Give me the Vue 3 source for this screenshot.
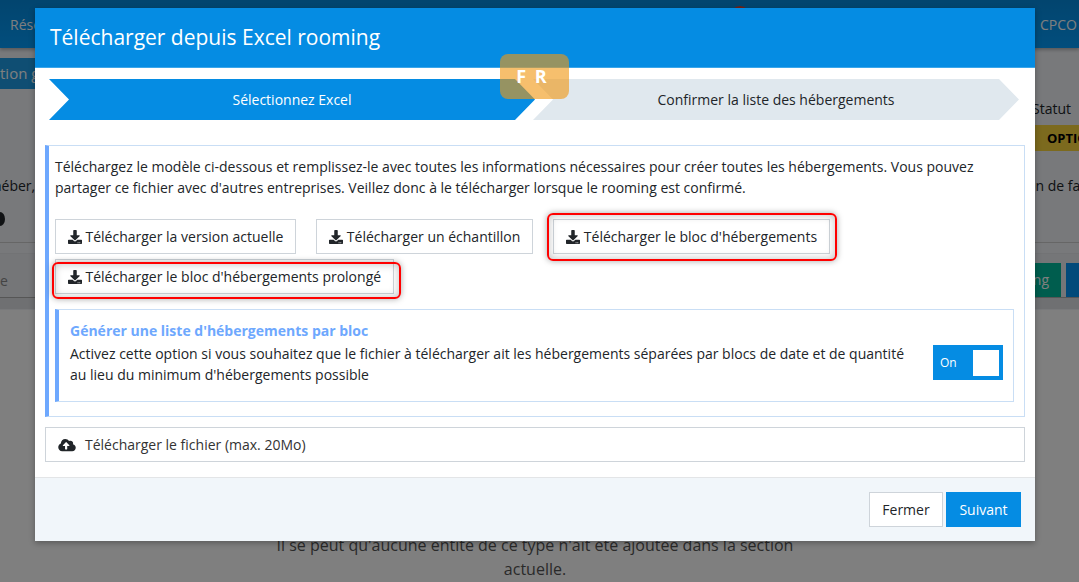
<script setup>
const steps = [
  { label: 'Sélectionnez Excel', active: true },
  { label: 'Confirmer la liste des hébergements', active: false }
]
const downloads = [
  { label: 'Télécharger la version actuelle', mark: '' },
  { label: 'Télécharger un échantillon', mark: '' },
  { label: "Télécharger le bloc d'hébergements", mark: 'mark-a' },
  { label: "Télécharger le bloc d'hébergements prolongé", mark: 'mark-b' }
]
</script>

<template>
  <div class="page">
    <header class="nav">
      <span>Réservations</span>
      <i class="nav-dot"></i>
      <span class="nav-right">CPCO</span>
    </header>
    <div class="upper">
      <div class="tab">tion générale</div>
      <div class="status-row"><span class="status-label">Statut</span></div>
      <div class="status-row"><span class="status-value">OPTIO</span></div>
      <div class="info-row"><span class="info-left">héber,</span><span class="info-right">on de fa</span></div>
      <div class="dot-row"><i class="dark-dot"></i></div>
      <div class="band"></div>
      <div class="filter-row">
        <span class="filter-text">e</span>
        <span class="btn-green">Rooming</span>
        <span class="btn-blue"></span>
      </div>
      <div class="band-low"></div>
    </div>
    <p class="empty">Il se peut qu'aucune entité de ce type n'ait été ajoutée dans la section actuelle.</p>

    <div class="overlay"></div>

    <section class="modal">
      <h1 class="modal-title">Télécharger depuis Excel rooming</h1>
      <div class="modal-body">
        <div class="stepper">
          <div v-for="s in steps" :key="s.label" class="step" :class="{ active: s.active }">{{ s.label }}</div>
        </div>
        <div class="alert">
          <p class="alert-text">Téléchargez le modèle ci-dessous et remplissez-le avec toutes les informations nécessaires pour créer toutes les hébergements. Vous pouvez partager ce fichier avec d'autres entreprises. Veillez donc à le télécharger lorsque le rooming est confirmé.</p>
          <div class="downloads">
            <button v-for="d in downloads" :key="d.label" class="dl" :class="d.mark" type="button">
              <svg class="dl-icon" viewBox="0 0 512 512" aria-hidden="true"><path d="M216 0h80c13.3 0 24 10.7 24 24v168h87.7c17.8 0 26.7 21.5 14.1 34.1L269.7 378.3c-7.5 7.5-19.8 7.5-27.3 0L90.1 226.1c-12.6-12.6-3.7-34.1 14.1-34.1H192V24c0-13.3 10.7-24 24-24zm296 376v112c0 13.3-10.7 24-24 24H24c-13.3 0-24-10.7-24-24V376c0-13.3 10.7-24 24-24h146.7l49 49c20.1 20.1 52.5 20.1 72.6 0l49-49H488c13.3 0 24 10.7 24 24zm-124 88c0-11-9-20-20-20s-20 9-20 20 9 20 20 20 20-9 20-20zm64 0c0-11-9-20-20-20s-20 9-20 20 9 20 20 20 20-9 20-20z"/></svg>
              <span>{{ d.label }}</span>
            </button>
          </div>
          <div class="option">
            <div class="option-copy">
              <h2 class="option-title">Générer une liste d'hébergements par bloc</h2>
              <p class="option-text">Activez cette option si vous souhaitez que le fichier à télécharger ait les hébergements séparées par blocs de date et de quantité au lieu du minimum d'hébergements possible</p>
            </div>
            <div class="toggle"><span>On</span><i class="knob"></i></div>
          </div>
        </div>
        <div class="upload">
          <svg class="up-icon" viewBox="0 0 640 512" aria-hidden="true"><path d="M537.6 226.6c4.1-10.7 6.4-22.4 6.4-34.6 0-53-43-96-96-96-19.7 0-38.1 6-53.3 16.2C367 64.2 315.3 32 256 32c-88.4 0-160 71.6-160 160 0 2.7.1 5.4.2 8.1C40.2 219.8 0 273.2 0 336c0 79.5 64.5 144 144 144h368c70.7 0 128-57.3 128-128 0-61.9-44-113.6-102.4-125.4zM393.4 288H328v112c0 8.8-7.2 16-16 16h-48c-8.8 0-16-7.2-16-16V288h-65.4c-14.3 0-21.4-17.2-11.3-27.3l105.4-105.4c6.2-6.2 16.4-6.2 22.6 0l105.4 105.4c10.1 10.1 3 27.3-11.3 27.3z"/></svg>
          <span>Télécharger le fichier (max. 20Mo)</span>
        </div>
      </div>
      <footer class="modal-foot">
        <button class="foot-btn" type="button">Fermer</button>
        <button class="foot-btn primary" type="button">Suivant</button>
      </footer>
    </section>

    <div class="lang-badge">F R</div>
  </div>
</template>

<style>
html, body { margin: 0; padding: 0; background: #fff; }
</style>

<style scoped>
.page {
  position: relative;
  width: 1079px;
  height: 582px;
  overflow: hidden;
  background: #fff;
  color: #212529;
  font: 14px/21px "Open Sans", "Liberation Sans", sans-serif;
}
.nav {
  position: relative;
  z-index: 1;
  height: 48px;
  background: linear-gradient(#058ade, #059cfa);
  box-shadow: 0 2px 3px rgba(0, 0, 0, .25);
  color: #fff;
  display: flex;
  justify-content: space-between;
  align-items: center;
  padding: 0 0 0 10px;
  white-space: nowrap;
}
.nav-right { width: 39px; overflow: hidden; }
.nav-dot {
  position: absolute;
  left: 730px;
  top: 6px;
  width: 20px;
  height: 20px;
  border-radius: 50%;
  background: #e5402a;
}
.upper { height: 262px; background: #f0f2f6; overflow: hidden; }
.tab {
  width: 120px;
  height: 31px;
  margin-top: 10px;
  background: #1e9ce6;
  color: #fff;
  line-height: 31px;
  font-size: 15px;
  white-space: nowrap;
  overflow: hidden;
}
.status-row { display: flex; justify-content: flex-end; }
.status-label { width: 47px; margin-top: 9px; }
.status-value {
  width: 44px;
  height: 26px;
  margin-top: 6px;
  padding-left: 12px;
  box-sizing: border-box;
  background: #f8d43c;
  color: #000;
  font-size: 13px;
  font-weight: 700;
  line-height: 26px;
  white-space: nowrap;
  overflow: hidden;
}
.info-row {
  display: flex;
  justify-content: space-between;
  margin-top: 24px;
  white-space: nowrap;
}
.info-left { margin-left: -7px; }
.info-right { width: 52px; overflow: hidden; }
.dot-row { height: 46px; padding-top: 16px; box-sizing: border-box; }
.dark-dot {
  display: block;
  width: 10px;
  height: 14px;
  margin-left: -5px;
  border-radius: 50%;
  background: #212529;
}
.band { height: 12px; border-top: 1px solid #cdcdcd; border-bottom: 1px solid #e4e6ea; box-sizing: border-box; }
.filter-row {
  display: flex;
  justify-content: flex-end;
  align-items: center;
  height: 44px;
  gap: 5px;
  padding-top: 9px;
  box-sizing: border-box;
  background: #eaecf0;
  border-bottom: 1px solid #adadad;
}
.filter-text { margin-right: auto; color: #888; }
.btn-green {
  width: 26px;
  height: 34px;
  padding-right: 12px;
  box-sizing: border-box;
  background: #00ba9c;
  color: #fff;
  line-height: 34px;
  display: flex;
  justify-content: flex-end;
  overflow: hidden;
}
.btn-blue { width: 13px; height: 34px; background: #0494f4; }
.band-low { height: 11px; background: #dfe1e5; }
.empty {
  width: 560px;
  margin: 223px 0 0 255px;
  font-size: 16px;
  line-height: 24px;
  text-align: center;
  color: #555;
}
.overlay {
  position: absolute;
  inset: 0;
  z-index: 2;
  background: rgba(0, 0, 0, .5);
}
.modal {
  position: absolute;
  z-index: 3;
  left: 35px;
  top: 8px;
  width: 1000px;
  height: 533px;
  display: flex;
  flex-direction: column;
  background: #fff;
  box-shadow: 0 2px 6px rgba(0, 0, 0, .3);
}
.modal-title {
  margin: 0;
  height: 60px;
  padding: 0 15px;
  box-sizing: border-box;
  background: #058ce3;
  border-bottom: 1px solid #3ba6ea;
  color: #fff;
  font-size: 21px;
  font-weight: 400;
  line-height: 59px;
}
.modal-body { flex: 1; padding: 11px 10px 0; }
.stepper {
  display: grid;
  grid-template-columns: 484px 486px;
  margin: 0 4px 25px;
  height: 41px;
}
.step {
  display: flex;
  align-items: center;
  justify-content: center;
  background: #e0e8ee;
  color: #212529;
  clip-path: polygon(0 0, calc(100% - 20px) 0, 100% 50%, calc(100% - 20px) 100%, 0 100%, 20px 50%);
}
.step.active { margin-right: -2px; background: #058ce3; color: #fff; }
.alert {
  box-sizing: border-box;
  height: 272px;
  padding: 10px 10px 0 6px;
  border: 1px solid #c9def5;
  border-left: 4px solid #6ea8fe;
}
.alert-text { margin: 0; }
.downloads {
  display: flex;
  flex-wrap: wrap;
  column-gap: 20px;
  row-gap: 5px;
  margin-top: 21px;
}
.dl {
  position: relative;
  display: inline-flex;
  align-items: center;
  gap: 3.5px;
  height: 35px;
  padding: 0 12px;
  background: #fff;
  border: 1px solid #ced4da;
  border-radius: 0;
  color: #212529;
  font: inherit;
}
.mark-a::after, .mark-b::after {
  content: "";
  position: absolute;
  border: 2px solid #f00;
  border-radius: 6px;
  box-shadow: 0 0 6px rgba(0, 0, 0, .35), inset 0 0 8px rgba(0, 0, 0, .25);
}
.mark-a::after { left: -7px; right: -8px; top: -7px; bottom: -8px; }
.mark-b::after { left: -4px; right: -8px; top: 2px; bottom: -6px; }
.dl-icon { width: 14px; height: 14px; fill: #212529; flex: none; }
.option {
  display: flex;
  align-items: flex-start;
  justify-content: space-between;
  box-sizing: border-box;
  height: 93px;
  margin-top: 15px;
  padding: 10px 10px 0 11px;
  border: 1px solid #c9def5;
  border-left: 4px solid #6ea8fe;
}
.option-copy { width: 845px; }
.option-title {
  margin: 0 0 2px;
  color: #6ea8fe;
  font-size: 14px;
  font-weight: 700;
  line-height: 21px;
}
.option-text { margin: 0; }
.toggle {
  display: flex;
  align-items: center;
  justify-content: space-between;
  box-sizing: border-box;
  width: 70px;
  height: 35px;
  margin-top: 25px;
  padding: 0 4px 0 7px;
  background: #058ce3;
  color: #fff;
  font-size: 12px;
}
.knob { width: 26px; height: 26px; background: #fff; }
.upload {
  display: flex;
  align-items: center;
  gap: 9px;
  box-sizing: border-box;
  height: 35px;
  margin-top: 10px;
  padding-left: 12px;
  border: 1px solid #ced4da;
  color: #333;
}
.up-icon { width: 18px; height: 14px; fill: #212529; flex: none; }
.modal-foot {
  display: flex;
  justify-content: flex-end;
  align-items: center;
  gap: 3px;
  box-sizing: border-box;
  height: 64px;
  padding: 0 14px;
  background: #f1f6fa;
  border-top: 1px solid #e3e5e7;
}
.foot-btn {
  width: 74px;
  height: 35px;
  padding: 0;
  background: #fff;
  border: 1px solid #ced4da;
  border-radius: 0;
  color: #212529;
  font: inherit;
}
.foot-btn.primary { width: 75px; background: #058ce3; border-color: #058ce3; color: #fff; }
.lang-badge {
  position: absolute;
  z-index: 4;
  left: 500px;
  top: 54px;
  width: 69px;
  height: 45px;
  padding-right: 6px;
  box-sizing: border-box;
  display: flex;
  align-items: center;
  justify-content: center;
  border-radius: 8px;
  background: rgba(240, 151, 20, .62);
  color: #fff;
  font-size: 18px;
  font-weight: 700;
  white-space: pre;
  word-spacing: 4px;
}
</style>
